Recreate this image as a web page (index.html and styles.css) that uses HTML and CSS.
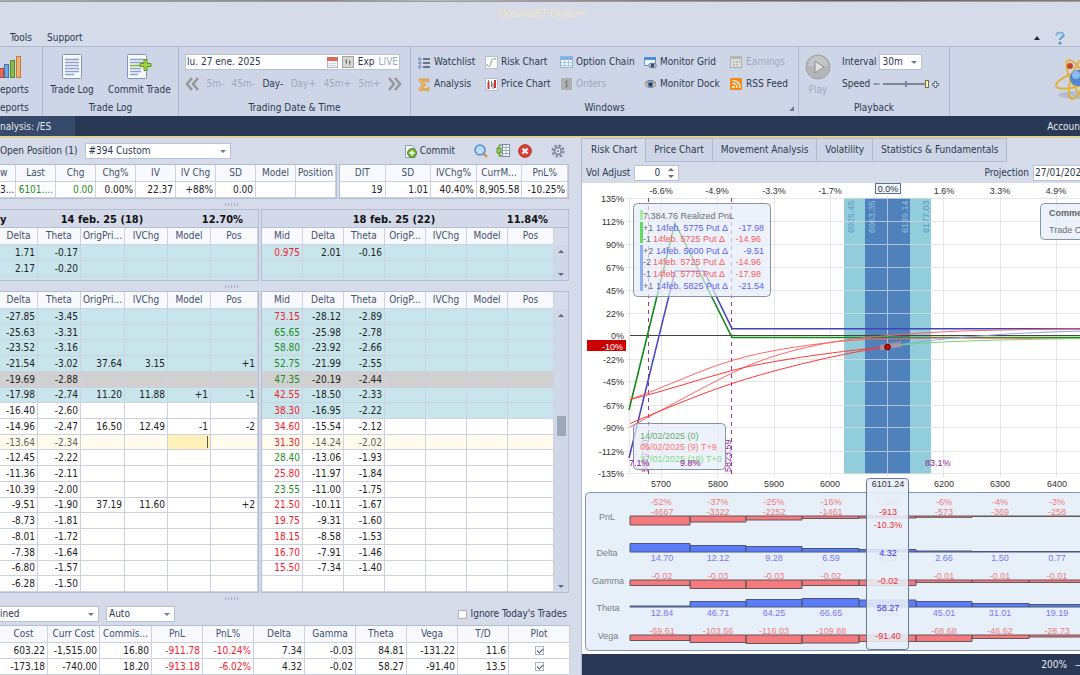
FILE: index.html
```
<!DOCTYPE html>
<html lang="en">
<head>
    <meta charset="UTF-8">
    <meta name="viewport" content="width=device-width, initial-scale=1.0">
    <link rel="stylesheet" href="styles.css">
    <title>OptionNET Explorer</title>
</head>
<body>
    <div class="desktop-edge"></div>
    <header class="titlebar">
        <h1>OptionNET Explorer</h1>
        <nav class="menu">
            <a href="#">Tools</a>
            <a href="#">Support</a>
            <button class="collapse" aria-label="Collapse ribbon"><svg width="6" height="4"><path d="M0 4L3 0L6 4Z" fill="#1e2a40"/></svg></button>
            <button class="help" aria-label="Help"><svg width="10" height="14" viewBox="0 0 10 14"><path d="M1.500 4.500C1.500 1 8.500 1 8.500 4.200C8.500 6.500 5 6 5 9" fill="none" stroke="#6aa6d6" stroke-width="2.400"/><path d="M1.500 4C2 1.500 7.500 1.500 8 4" fill="none" stroke="#b8dcf5" stroke-width="1"/><circle cx="5" cy="12" r="1.600" fill="#5b96cc"/></svg></button>
        </nav>
    </header>

    <div class="ribbon">
        <section class="group g-reports">
            <div class="group-body">
                <button class="big">
                    <svg width="24" height="26" viewBox="0 0 24 26"><rect x="-1.500" y="14.500" width="5" height="9" fill="#e2695c" stroke="#b04a42"/><rect x="4.500" y="10.500" width="4" height="13" fill="#6ea8dc" stroke="#3f76ae"/><rect x="10.500" y="6.500" width="4" height="17" fill="#8cba4c" stroke="#5c8a2c"/><rect x="16.500" y="2.500" width="4" height="21" fill="#f0b270" stroke="#c07c3c"/></svg>
                    eports
                </button>
            </div>
            <h2>eports</h2>
        </section>
        <section class="group g-log">
            <div class="group-body">
                <button class="big">
                    <svg width="26" height="26" viewBox="0 0 26 26"><rect x="3.500" y="0.500" width="19" height="24" rx="1" fill="#f4f7fc" stroke="#8496b8"/><path d="M6 5.500H20M6 8.500H20M6 11.500H20M6 14.500H20M6 17.500H20M6 20.500H15" stroke="#8fa2c6" stroke-width="1.500"/></svg>
                    Trade Log
                </button>
                <button class="big">
                    <svg width="26" height="26" viewBox="0 0 26 26"><rect x="1.500" y="0.500" width="19" height="24" rx="1" fill="#f4f7fc" stroke="#8496b8"/><path d="M4 5.500H18M4 8.500H18M4 14.500H15M4 17.500H15M4 20.500H12" stroke="#8fa2c6" stroke-width="1.500"/><path d="M4 11.500H14" stroke="#7eb33a" stroke-width="1.500"/><path d="M18 5.500H21V9.500H25V12.500H21V16.500H18V12.500H14V9.500H18Z" fill="#a3d847" stroke="#5e9420"/></svg>
                    Commit Trade
                </button>
            </div>
            <h2>Trade Log</h2>
        </section>
        <section class="group g-date">
            <div class="group-body date-body">
                <div class="datebox">
                    <input type="text" value="lu. 27 ene. 2025" aria-label="Trading date">
                    <svg width="11" height="11"><rect x="0.500" y="0.500" width="10" height="10" fill="#f2f5fa" stroke="#b0b8c8"/><rect x="0" y="0" width="11" height="4" fill="#dc6a50"/><path d="M2 6.500H9M2 8.500H9" stroke="#ccd2e0"/></svg>
                    <svg width="12" height="12"><rect x="0.500" y="0.500" width="11" height="11" fill="#d6d6d2" stroke="#a4a4a0"/><path d="M4.500 3V8M3 5.500H5M7.500 4V9M7 6.500H9" stroke="#777"/></svg>
                    <span>Exp</span><span class="dim">LIVE</span>
                </div>
                <div class="steps">
                    <button aria-label="Back"><svg width="14" height="14"><path d="M7 1L2 7L7 13M13 1L8 7L13 13" fill="none" stroke="#96989a" stroke-width="2.600"/></svg></button>
                    <button class="dim">5m-</button>
                    <button class="dim">45m-</button>
                    <button>Day-</button>
                    <button class="dim">Day+</button>
                    <button class="dim">45m+</button>
                    <button class="dim">5m+</button>
                    <button aria-label="Forward"><svg width="14" height="14"><path d="M1 1L6 7L1 13M7 1L12 7L7 13" fill="none" stroke="#96989a" stroke-width="2.600"/></svg></button>
                </div>
            </div>
            <h2>Trading Date &amp; Time</h2>
        </section>
        <section class="group g-windows">
            <div class="group-body windows">
                <button><svg width="13" height="13"><path d="M5 3H12M5 7H12M5 11H12" stroke="#46566e" stroke-width="1.500"/><circle cx="1.800" cy="3" r="1.200" fill="none" stroke="#5b87bb"/><circle cx="1.800" cy="7" r="1.200" fill="none" stroke="#5b87bb"/><circle cx="1.800" cy="11" r="1.200" fill="none" stroke="#5b87bb"/></svg>Watchlist</button>
                <button><svg width="13" height="13"><rect x="0.500" y="0.500" width="12" height="12" fill="#fafcff" stroke="#b4bfd2"/><path d="M2 8C3 12 5 11 6 7C6.500 3 8 2 11 3" fill="none" stroke="#7e9c5a"/></svg>Risk Chart</button>
                <button><svg width="13" height="13"><rect x="0.500" y="0.500" width="12" height="11" fill="#f4f9ff" stroke="#90b4dc"/><rect x="1" y="1" width="11" height="3" fill="#7fb0e4"/><path d="M1 6.500H12M1 9.500H12M4.500 2V12M8.500 2V12" stroke="#a9c6e8"/></svg>Option Chain</button>
                <button><svg width="13" height="13"><rect x="0.500" y="1.500" width="11" height="8" fill="#eff6ff" stroke="#6a9cd4"/><rect x="0" y="1" width="12" height="3" fill="#4f8ed6"/><path d="M4 9.500C6 6.500 11 6.500 13 9.500C11 12.500 6 12.500 4 9.500Z" fill="#d4dcec" stroke="#56637e"/><circle cx="8.500" cy="9.500" r="1.800" fill="#2f4160"/></svg>Monitor Grid</button>
                <button class="dim"><svg width="13" height="13"><rect x="0.500" y="0.500" width="11" height="11" fill="#dedede" stroke="#b0b0b0"/><rect x="0" y="0" width="12" height="3" fill="#b6b6b6"/><path d="M3 6H5M6 6H8M9 6H10M3 9H5M6 9H8" stroke="#999"/></svg>Earnings</button>
                <button><svg width="13" height="13"><path d="M1 1H11V4H10L9 3H4.500L8 6.500L4.500 10.500H9.500L11 9V12.500H1V11L4.500 6.500L1 2.500Z" fill="#f0b95c" stroke="#cf8f34" stroke-width="0.700"/></svg>Analysis</button>
                <button><svg width="13" height="13"><rect x="0.500" y="0.500" width="12" height="12" fill="#fafcff" stroke="#b4bfd2"/><path d="M3.500 4V11M10 2V10" stroke="#cc3030" stroke-width="2"/><path d="M3.500 2V4M6.500 3V9M8 5V11" stroke="#777"/></svg>Price Chart</button>
                <button class="dim"><svg width="13" height="13"><rect x="1" y="0" width="11" height="12" rx="1" fill="#aeb0b2"/><path d="M8.500 4C6 2.500 4.500 5 6.500 6C9 7 7.500 9.500 4.500 8.500M6.500 2V10" fill="none" stroke="#7e8082"/></svg>Orders</button>
                <button><svg width="13" height="13"><path d="M1 7C3 3 10 3 12 7C10 10.500 3 10.500 1 7Z" fill="#e8dcd0" stroke="#a08672"/><circle cx="6.500" cy="6.500" r="3" fill="#4d7cb4"/><circle cx="6.500" cy="6.500" r="1.400" fill="#182844"/><path d="M1 5C4 1.500 9 1.500 12 5" fill="none" stroke="#7c6a60"/></svg>Monitor Dock</button>
                <button><svg width="13" height="13"><rect width="12" height="12" rx="1" fill="#f08a1c"/><circle cx="3.500" cy="9" r="1.200" fill="#fff"/><path d="M2.500 5.500A4 4 0 0 1 7 10M2.500 2.500A7 7 0 0 1 10 10" fill="none" stroke="#fff" stroke-width="1.200"/></svg>RSS Feed</button>
            </div>
            <h2>Windows</h2>
            <svg class="launcher" width="5" height="5"><path d="M5 0V5H0Z" fill="#6b7c98"/></svg>
        </section>
        <section class="group g-play">
            <div class="group-body play-body">
                <button class="big dim">
                    <svg width="26" height="26" viewBox="0 0 26 26"><circle cx="13" cy="13" r="12" fill="#b4b5b7" stroke="#9fa1a4"/><path d="M3 12A10 10 0 0 1 23 12Z" fill="#c4c5c7"/><path d="M10 7L19 13L10 19Z" fill="#e0e1e3" stroke="#8c8e92"/></svg>
                    Play
                </button>
                <div class="play-options">
                    <div class="line">
                        <label for="interval">Interval</label>
                        <span class="drop drop-interval"><select id="interval"><option>30m</option></select></span>
                    </div>
                    <div class="line">
                        <label for="speed">Speed</label>
                        <svg width="7" height="6"><rect x="0.500" y="2" width="6" height="2" fill="#8d98ac"/></svg>
                        <input id="speed" type="range" min="0" max="10" value="10">
                        <svg width="7" height="7"><path d="M2.500 0.500H4.500V2.500H6.500V4.500H4.500V6.500H2.500V4.500H0.500V2.500H2.500Z" fill="#e8ecf4" stroke="#5d6b82"/></svg>
                    </div>
                </div>
            </div>
            <h2>Playback</h2>
        </section>
        <div class="brand">
            <svg width="46" height="46" viewBox="0 0 46 46"><ellipse cx="24" cy="38" rx="20" ry="4" fill="#b4bccd"/><g fill="none" stroke="#e2b23c" stroke-width="2"><ellipse cx="24" cy="22" rx="7" ry="21" transform="rotate(-28 24 22)"/><ellipse cx="24" cy="22" rx="7" ry="21" transform="rotate(18 24 22)"/><ellipse cx="24" cy="22" rx="7" ry="23" transform="rotate(72 24 22)"/></g><circle cx="24" cy="21" r="8" fill="#4b88cf"/><circle cx="22" cy="18" r="4" fill="#8dbcec"/><circle cx="16" cy="9" r="3" fill="#c4432a"/></svg>
        </div>
    </div>

    <div class="doc-tabs">
        <a class="doc-tab" href="#">nalysis: /ES</a>
        <span class="account">Accoun</span>
    </div>

    <main>
        <div class="analysis">
            <div class="toolbar">
                <label for="position">Open Position (1)</label>
                <span class="drop drop-position"><select id="position"><option>#394 Custom</option></select></span>
                <button class="commit"><svg width="13" height="13"><path d="M1.500 0.500H8L11 3.500V12.500H1.500Z" fill="#fbfdff" stroke="#8d9bb4"/><circle cx="8" cy="8" r="4.500" fill="#7cb53c" stroke="#4e8a20"/><path d="M8 5.500V10.500M5.500 8H10.500" stroke="#fff" stroke-width="1.500"/></svg>Commit</button>
                <button aria-label="Zoom"><svg width="14" height="14"><path d="M9 9L13 13" stroke="#d39a52" stroke-width="2.500"/><circle cx="6" cy="6" r="5" fill="#b7dafa" stroke="#5a8cc8" stroke-width="1.500"/></svg></button>
                <button aria-label="Columns"><svg width="14" height="14"><rect x="6.500" y="0.500" width="7" height="12" fill="#fff" stroke="#7b8fae"/><path d="M7 3.500H13M7 6.500H13M7 9.500H13M10 1V12" stroke="#9aabc6"/><path d="M1 4H5V9H1ZM3 1V4M3 9V12H6M3 1H6" fill="#9fd05a" stroke="#5b8e2e"/></svg></button>
                <button aria-label="Delete"><svg width="14" height="14"><circle cx="7" cy="7" r="6.300" fill="#dc4038" stroke="#b3261e"/><path d="M4.500 4.500L9.500 9.500M9.500 4.500L4.500 9.500" stroke="#fff" stroke-width="2"/></svg></button>
                <button class="settings" aria-label="Settings"><svg width="14" height="14"><circle cx="7" cy="7" r="5.500" fill="none" stroke="#7c879b" stroke-width="2" stroke-dasharray="2.400 1.900"/><circle cx="7" cy="7" r="3.400" fill="#eef1f7" stroke="#8791a3" stroke-width="2"/><circle cx="7" cy="7" r="1.200" fill="#8791a3"/></svg></button>
            </div>

            <div class="summary">
                <table class="quote">
                    <thead><tr><th>w</th><th>Last</th><th>Chg</th><th>Chg%</th><th>IV</th><th>IV Chg</th><th>SD</th><th>Model</th><th>Position</th></tr></thead>
                    <tbody><tr><td>3....</td><td class="up">6101....</td><td class="up">0.00</td><td>0.00%</td><td>22.37</td><td>+88%</td><td>0.00</td><td></td><td></td></tr></tbody>
                </table>
                <table class="trade">
                    <thead><tr><th>DIT</th><th>SD</th><th>IVChg%</th><th>CurrM...</th><th>PnL%</th></tr></thead>
                    <tbody><tr><td>19</td><td>1.01</td><td>40.40%</td><td>8,905.58</td><td>-10.25%</td></tr></tbody>
                </table>
            </div>
            <div class="splitter"></div>

            <div class="chains chains-top">
                <div class="chain">
                    <div class="expiry"><span>y</span><span>14 feb. 25 (18)</span><span>12.70%</span></div>
                    <table class="front">
                        <thead><tr><th>Delta</th><th>Theta</th><th>OrigPri...</th><th>IVChg</th><th>Model</th><th>Pos</th></tr></thead>
                        <tbody>
                            <tr class="itm"><td>1.71</td><td>-0.17</td><td></td><td></td><td></td><td></td></tr>
                            <tr class="itm"><td>2.17</td><td>-0.20</td><td></td><td></td><td></td><td></td></tr>
                            <tr class="itm"><td></td><td></td><td></td><td></td><td></td><td></td></tr>
                        </tbody>
                    </table>
                </div>
                <div class="chain">
                    <div class="expiry back-expiry"><span></span><span>18 feb. 25 (22)</span><span>11.84%</span></div>
                    <div class="with-scroll">
                        <table class="back">
                            <thead><tr><th>Mid</th><th>Delta</th><th>Theta</th><th>OrigP...</th><th>IVChg</th><th>Model</th><th>Pos</th></tr></thead>
                            <tbody>
                                <tr class="itm"><td class="down">0.975</td><td>2.01</td><td>-0.16</td><td></td><td></td><td></td><td></td></tr>
                                <tr class="itm"><td></td><td></td><td></td><td></td><td></td><td></td><td></td></tr>
                                <tr class="itm"><td></td><td></td><td></td><td></td><td></td><td></td><td></td></tr>
                            </tbody>
                        </table>
                        <div class="scroll"><i class="arrow-up"></i><i class="arrow-down"></i></div>
                    </div>
                </div>
            </div>
            <div class="splitter"></div>

            <div class="chains chains-main">
                <div class="chain">
                    <table class="front">
                        <thead><tr><th>Delta</th><th>Theta</th><th>OrigPri...</th><th>IVChg</th><th>Model</th><th>Pos</th></tr></thead>
                        <tbody>
                            <tr class="itm"><td>-27.85</td><td>-3.45</td><td></td><td></td><td></td><td></td></tr>
                            <tr class="itm"><td>-25.63</td><td>-3.31</td><td></td><td></td><td></td><td></td></tr>
                            <tr class="itm"><td>-23.52</td><td>-3.16</td><td></td><td></td><td></td><td></td></tr>
                            <tr class="itm"><td>-21.54</td><td>-3.02</td><td>37.64</td><td>3.15</td><td></td><td>+1</td></tr>
                            <tr class="marked"><td>-19.69</td><td>-2.88</td><td></td><td></td><td></td><td></td></tr>
                            <tr class="itm"><td>-17.98</td><td>-2.74</td><td>11.20</td><td>11.88</td><td>+1</td><td>-1</td></tr>
                            <tr><td>-16.40</td><td>-2.60</td><td></td><td></td><td></td><td></td></tr>
                            <tr><td>-14.96</td><td>-2.47</td><td>16.50</td><td>12.49</td><td>-1</td><td>-2</td></tr>
                            <tr class="current"><td>-13.64</td><td>-2.34</td><td></td><td></td><td class="editing"><i class="caret"></i></td><td></td></tr>
                            <tr><td>-12.45</td><td>-2.22</td><td></td><td></td><td></td><td></td></tr>
                            <tr><td>-11.36</td><td>-2.11</td><td></td><td></td><td></td><td></td></tr>
                            <tr><td>-10.39</td><td>-2.00</td><td></td><td></td><td></td><td></td></tr>
                            <tr><td>-9.51</td><td>-1.90</td><td>37.19</td><td>11.60</td><td></td><td>+2</td></tr>
                            <tr><td>-8.73</td><td>-1.81</td><td></td><td></td><td></td><td></td></tr>
                            <tr><td>-8.01</td><td>-1.72</td><td></td><td></td><td></td><td></td></tr>
                            <tr><td>-7.38</td><td>-1.64</td><td></td><td></td><td></td><td></td></tr>
                            <tr><td>-6.80</td><td>-1.57</td><td></td><td></td><td></td><td></td></tr>
                            <tr><td>-6.28</td><td>-1.50</td><td></td><td></td><td></td><td></td></tr>
                        </tbody>
                    </table>
                </div>
                <div class="chain">
                    <div class="with-scroll">
                        <table class="back">
                            <thead><tr><th>Mid</th><th>Delta</th><th>Theta</th><th>OrigP...</th><th>IVChg</th><th>Model</th><th>Pos</th></tr></thead>
                            <tbody>
                                <tr class="itm"><td class="down">73.15</td><td>-28.12</td><td>-2.89</td><td></td><td></td><td></td><td></td></tr>
                                <tr class="itm"><td class="up">65.65</td><td>-25.98</td><td>-2.78</td><td></td><td></td><td></td><td></td></tr>
                                <tr class="itm"><td class="up">58.80</td><td>-23.92</td><td>-2.66</td><td></td><td></td><td></td><td></td></tr>
                                <tr class="itm"><td class="up">52.75</td><td>-21.99</td><td>-2.55</td><td></td><td></td><td></td><td></td></tr>
                                <tr class="marked"><td class="up">47.35</td><td>-20.19</td><td>-2.44</td><td></td><td></td><td></td><td></td></tr>
                                <tr class="itm"><td class="down">42.55</td><td>-18.50</td><td>-2.33</td><td></td><td></td><td></td><td></td></tr>
                                <tr class="itm"><td class="down">38.30</td><td>-16.95</td><td>-2.22</td><td></td><td></td><td></td><td></td></tr>
                                <tr><td class="down">34.60</td><td>-15.54</td><td>-2.12</td><td></td><td></td><td></td><td></td></tr>
                                <tr class="current"><td class="down">31.30</td><td>-14.24</td><td>-2.02</td><td></td><td></td><td></td><td></td></tr>
                                <tr><td class="up">28.40</td><td>-13.06</td><td>-1.93</td><td></td><td></td><td></td><td></td></tr>
                                <tr><td class="down">25.80</td><td>-11.97</td><td>-1.84</td><td></td><td></td><td></td><td></td></tr>
                                <tr><td class="up">23.55</td><td>-11.00</td><td>-1.75</td><td></td><td></td><td></td><td></td></tr>
                                <tr><td class="down">21.50</td><td>-10.11</td><td>-1.67</td><td></td><td></td><td></td><td></td></tr>
                                <tr><td class="down">19.75</td><td>-9.31</td><td>-1.60</td><td></td><td></td><td></td><td></td></tr>
                                <tr><td class="down">18.15</td><td>-8.58</td><td>-1.53</td><td></td><td></td><td></td><td></td></tr>
                                <tr><td class="down">16.70</td><td>-7.91</td><td>-1.46</td><td></td><td></td><td></td><td></td></tr>
                                <tr><td class="down">15.50</td><td>-7.34</td><td>-1.40</td><td></td><td></td><td></td><td></td></tr>
                                <tr><td>&nbsp;</td><td></td><td></td><td></td><td></td><td></td><td></td></tr>
                            </tbody>
                        </table>
                        <div class="scroll"><i class="arrow-up"></i><i class="thumb"></i><i class="arrow-down"></i></div>
                    </div>
                </div>
            </div>
            <div class="splitter"></div>

            <div class="filters">
                <span class="drop drop-combined"><select aria-label="View"><option>ined</option></select></span>
                <span class="drop drop-auto"><select aria-label="Mode"><option>Auto</option></select></span>
                <label class="ignore"><input type="checkbox"> Ignore Today's Trades</label>
            </div>
            <table class="totals">
                <thead><tr><th>Cost</th><th>Curr Cost</th><th>Commis...</th><th>PnL</th><th>PnL%</th><th>Delta</th><th>Gamma</th><th>Theta</th><th>Vega</th><th>T/D</th><th>Plot</th></tr></thead>
                <tbody>
                    <tr><td>603.22</td><td>-1,515.00</td><td>16.80</td><td class="down">-911.78</td><td class="down">-10.24%</td><td>7.34</td><td>-0.03</td><td>84.81</td><td>-131.22</td><td>11.6</td><td class="plot"><input type="checkbox" aria-label="Plot first trade" checked></td></tr>
                    <tr><td>-173.18</td><td>-740.00</td><td>18.20</td><td class="down">-913.18</td><td class="down">-6.02%</td><td>4.32</td><td>-0.02</td><td>58.27</td><td>-91.40</td><td>13.5</td><td class="plot"><input type="checkbox" aria-label="Plot second trade" checked></td></tr>
                </tbody>
            </table>
        </div>

        <div class="charts">
            <nav class="chart-tabs">
                <a class="active" href="#">Risk Chart</a>
                <a href="#">Price Chart</a>
                <a href="#">Movement Analysis</a>
                <a href="#">Volatility</a>
                <a href="#">Statistics &amp; Fundamentals</a>
            </nav>
            <div class="chart-options">
                <label for="vol">Vol Adjust</label>
                <span class="spin"><input id="vol" type="text" value="0"><span><i class="arrow-up"></i><i class="arrow-down"></i></span></span>
                <label class="projection" for="projection">Projection</label>
                <input id="projection" type="text" value="27/01/2025">
            </div>
            <svg class="risk" viewBox="582 183 498 471" preserveAspectRatio="xMinYMin slice">
                <!-- price bands -->
                <rect x="844" y="198" width="87" height="276" fill="#92cddc"/>
                <rect x="865" y="198" width="45" height="276" fill="#4f81bd"/>
                <g class="band">
                    <text transform="translate(854 233) rotate(-90)" fill="#5f97c4">6025.45</text>
                    <text transform="translate(875 233) rotate(-90)" fill="#92c0dc">6063.35</text>
                    <text transform="translate(908 233) rotate(-90)" fill="#92c0dc">6139.14</text>
                    <text transform="translate(929 233) rotate(-90)" fill="#5f97c4">6177.03</text>
                </g>
                <!-- grid -->
                <path class="grid" d="M626 198.500H1080M626 221.500H1080M626 244.500H1080M626 267.500H1080M626 290.500H1080M626 313.500H1080M626 359.500H1080M626 381.500H1080M626 405.500H1080M626 427.500H1080M626 451.500H1080M626 473.500H1080M629.500 198V474M661.500 195V477M717.500 195V477M774.500 195V477M830.500 195V477M887.500 195V477M943.500 195V477M1000.500 195V477M1056.500 195V477"/>
                <path d="M630 335.500H1080" stroke="#444"/>
                <path d="M648.500 198V474M731.500 198V474" stroke="#a030a0" stroke-dasharray="4 4"/>
                <!-- expiration and T+n curves -->
                <path d="M629 410L675 223L732 337.500H1080" fill="none" stroke="#118a18" stroke-width="1.600"/>
                <path d="M629 458L675 271H704L732 328.700H1080" fill="none" stroke="#4444bb" stroke-width="1.500"/>
                <g fill="none" stroke="#ff6666">
                    <path d="M630 399.500C668 386 700 370 732 360.500S800 346 830 342.500S890 338 950 338L1080 338.500"/>
                    <path d="M630 427C665 408 700 389 732 373S800 348 830 342.500S930 331.500 980 330.500S1050 329 1080 329"/>
                    <path d="M630 399.500C665 391 700 379 732 370.500S830 352 888 346.700" stroke="#ff3838"/>
                    <path d="M630 423.500C665 409 700 394 732 383.500S830 355 888 346.700" stroke="#ff3838"/>
                    <path d="M888 346.700C930 339 980 336 1000 334.500S1050 332 1080 331" stroke="#8aa8ee"/>
                    <path d="M888 346.700C930 341 990 340 1080 338.500" stroke="#72d872"/>
                </g>
                <path d="M880 345L901 341.500V347L880 350.500Z" fill="#c09898" fill-opacity="0.700"/>
                <circle cx="887.500" cy="347" r="2.800" fill="#ee0000" stroke="#400"/>
                <!-- axis labels -->
                <g class="axis end">
                    <text x="624" y="202">135%</text><text x="624" y="225">112%</text><text x="624" y="248">90%</text><text x="624" y="271">67%</text><text x="624" y="294">45%</text><text x="624" y="317">22%</text><text x="624" y="339">0%</text><text x="624" y="363">-22%</text><text x="624" y="385">-45%</text><text x="624" y="409">-67%</text><text x="624" y="431">-90%</text><text x="624" y="455">-112%</text><text x="624" y="477">-135%</text>
                </g>
                <rect x="587" y="340" width="39" height="11" fill="#cc0000"/>
                <text class="end" x="623" y="350" fill="#fff">-10%</text>
                <rect x="875.500" y="183.500" width="25" height="10" fill="#edf4fb" stroke="#5f7388"/>
                <g class="axis mid">
                    <text x="661" y="194">-6.6%</text><text x="717" y="194">-4.9%</text><text x="774" y="194">-3.3%</text><text x="830" y="194">-1.7%</text><text x="888" y="192">0.0%</text><text x="944" y="194">1.6%</text><text x="1000" y="194">3.3%</text><text x="1056" y="194">4.9%</text>
                    <text x="661" y="487">5700</text><text x="718" y="487">5800</text><text x="774" y="487">5900</text><text x="830" y="487">6000</text><text x="944" y="487">6200</text><text x="1000" y="487">6300</text><text x="1057" y="487">6400</text>
                </g>
                <g fill="#902090">
                    <text transform="translate(648 472) rotate(-90)">5677.20</text>
                    <text transform="translate(731 472) rotate(-90)">5823.59</text>
                </g>
                <!-- open legs -->
                <rect class="note" x="633.500" y="203.500" width="137" height="93" rx="4"/>
                <rect x="640" y="210" width="3" height="10" fill="#a9eba9"/>
                <rect x="640" y="222" width="3" height="21" fill="#66d866"/>
                <rect x="640" y="245" width="3" height="46" fill="#8fb2ee"/>
                <g fill="#6b6f78"><text x="643" y="219">7,384.76 Realized PnL</text><text x="643" y="231">+1</text><text x="643" y="242">-1</text><text x="643" y="254">+2</text><text x="643" y="265">-2</text><text x="643" y="277">-1</text><text x="643" y="289">+1</text></g>
                <g fill="#5c62f4"><text x="656" y="231">14feb. 5775 Put Δ</text><text x="656" y="254">14feb. 5600 Put Δ</text><text x="656" y="289">14feb. 5825 Put Δ</text></g>
                <g fill="#fa5a5e"><text x="653" y="242">14feb. 5725 Put Δ</text><text x="653" y="265">14feb. 5725 Put Δ</text><text x="653" y="277">14feb. 5775 Put Δ</text></g>
                <g class="end" fill="#5c62f4"><text x="764" y="231">-17.98</text><text x="764" y="254">-9.51</text><text x="764" y="289">-21.54</text></g>
                <g class="end" fill="#fa5a5e"><text x="761" y="242">-14.96</text><text x="761" y="265">-14.96</text><text x="761" y="277">-17.98</text></g>
                <!-- dates -->
                <rect class="note" x="633.500" y="423.500" width="92" height="46" rx="4"/>
                <text x="640" y="439" fill="#68ab6c">14/02/2025 (0)</text>
                <text x="640" y="450" fill="#ff7676">05/02/2025 (9) T+9</text>
                <text x="640" y="462" fill="#80dc84">27/01/2025 (18) T+0</text>
                <g fill="#902090"><text x="629" y="466">7.1%</text><text x="680" y="466">9.8%</text><text x="925" y="466">83.1%</text></g>
                <!-- comments -->
                <rect class="note" x="1040.500" y="203.500" width="60" height="36" rx="4"/>
                <text class="bold" x="1049" y="216" fill="#5f636b">Comme</text>
                <text x="1049" y="233" fill="#6b6f78">Trade O</text>
                <!-- greeks by price -->
                <rect x="585.500" y="492.500" width="520" height="158" rx="4" fill="#e7eff8" stroke="#8295aa"/>
                <g class="mid" fill="#7a7e86"><text x="607" y="520">PnL</text><text x="607" y="556">Delta</text><text x="608" y="584">Gamma</text><text x="608" y="611">Theta</text><text x="608" y="639">Vega</text></g>
                <g class="mid losses">
                    <text x="661" y="505">-52%</text><text x="718" y="505">-37%</text><text x="774" y="505">-25%</text><text x="831" y="505">-16%</text><text x="888" y="505">-10%</text><text x="944" y="505">-6%</text><text x="1000" y="505">-4%</text><text x="1057" y="505">-3%</text>
                    <text x="662" y="515">-4667</text><text x="718" y="515">-3322</text><text x="774" y="515">-2252</text><text x="831" y="515">-1461</text><text x="944" y="515">-573</text><text x="1000" y="515">-369</text><text x="1057" y="515">-258</text>
                    <text x="662" y="579">-0.02</text><text x="718" y="579">-0.03</text><text x="774" y="579">-0.03</text><text x="831" y="579">-0.02</text><text x="944" y="579">-0.01</text><text x="1000" y="579">-0.01</text><text x="1057" y="579">-0.01</text>
                    <text x="662" y="634">-69.61</text><text x="718" y="634">-103.56</text><text x="774" y="634">-116.03</text><text x="831" y="634">-109.88</text><text x="944" y="634">-68.68</text><text x="1000" y="634">-46.62</text><text x="1057" y="634">-28.73</text>
                </g>
                <g class="mid gains">
                    <text x="662" y="561">14.70</text><text x="718" y="561">12.12</text><text x="774" y="561">9.28</text><text x="831" y="561">6.59</text><text x="888" y="561">4.33</text><text x="944" y="561">2.66</text><text x="1000" y="561">1.50</text><text x="1057" y="561">0.77</text>
                    <text x="662" y="616">12.84</text><text x="718" y="616">46.71</text><text x="774" y="616">64.25</text><text x="831" y="616">66.65</text><text x="888" y="616">58.41</text><text x="944" y="616">45.01</text><text x="1000" y="616">31.01</text><text x="1057" y="616">19.19</text>
                </g>
                <g class="loss-bars">
                    <path d="M630 516H690V525H630ZM690 516H746V522H690ZM746 516H802V520H746ZM802 516H859V518.500H802ZM859 516H916V518H859ZM916 516H972V517.300H916ZM972 516H1090V516.500H972Z"/>
                    <path d="M630 580H690V585.500H630ZM690 580H746V588.500H690ZM746 580H802V588.500H746ZM802 580H859V585.500H802ZM859 580H916V585.500H859ZM916 580H972V582.500H916ZM972 580H1029V582.500H972ZM1029 580H1090V582.500H1029Z"/>
                    <path d="M630 635H690V640.500H630ZM690 635H746V642.500H690ZM746 635H802V643.500H746ZM802 635H859V643H802ZM859 635H916V641.500H859ZM916 635H972V641.500H916ZM972 635H1029V638.500H972ZM1029 635H1090V637H1029Z"/>
                </g>
                <g class="gain-bars">
                    <path d="M630 552H690V543.500H630ZM690 552H746V545.500H690ZM746 552H802V546.500H746ZM802 552H859V548.500H802ZM859 552H916V549.500H859ZM916 552H972V551H916ZM972 552H1090V551.500H972Z"/>
                    <path d="M630 607H690V606H630ZM690 607H746V601.500H690ZM746 607H802V599.500H746ZM802 607H859V598.500H802ZM859 607H916V600H859ZM916 607H972V601.500H916ZM972 607H1029V603.500H972ZM1029 607H1090V604.500H1029Z"/>
                </g>
                <!-- current price column -->
                <rect x="866.500" y="478.500" width="42" height="171" rx="3" fill="#e7eff8" fill-opacity="0.880" stroke="#66798f"/>
                <g class="mid">
                    <text x="888" y="487" fill="#333">6101.24</text>
                    <text x="888" y="515" fill="#f03038">-913</text><text x="888" y="528" fill="#f03038">-10.3%</text>
                    <text x="888" y="556" fill="#3434f0">4.32</text><text x="888" y="584" fill="#f03038">-0.02</text>
                    <text x="888" y="611" fill="#3434f0">58.27</text><text x="888" y="639" fill="#f03038">-91.40</text>
                </g>
            </svg>
            <footer><span>200%</span><span>—</span></footer>
        </div>
    </main>
</body>
</html>
```
FILE: styles.css
```
* { box-sizing: border-box; }
body {
    margin: 0;
    height: 100vh;
    display: flex;
    flex-direction: column;
    overflow: hidden;
    background-color: #d6dbe9;
    color: #2b3950;
    font: 10px/14px "DejaVu Sans Condensed", "DejaVu Sans", sans-serif;
    white-space: nowrap;
}
h1, h2 { margin: 0; font-size: 10px; font-weight: normal; }
a { color: inherit; text-decoration: none; }
button, input, select {
    margin: 0;
    padding: 0;
    border: 0;
    background: none;
    color: inherit;
    font: inherit;
    line-height: 14px;
}
svg { display: block; flex: none; }
.dim { color: #9ea8bb; }

/* title bar */
.desktop-edge {
    height: 2px;
    flex: none;
    border-bottom: 1px solid #999ca3;
    background: linear-gradient(90deg, #aaa, #8a8580 30%, #bbb 40%, #857c78 60%, #6a5a5c 80%, #8c7d70);
}
.titlebar { height: 44px; flex: none; }
.titlebar h1 {
    padding: 5px 0 0 6px;
    color: #f1e7bf;
    text-align: center;
}
.menu {
    display: flex;
    align-items: center;
    gap: 15px;
    padding: 10px 15px 0 10px;
    height: 24px;
}
.collapse { margin-left: auto; }

/* ribbon */
.ribbon {
    display: flex;
    flex: none;
    height: 70px;
    border-top: 1px solid #aebad0;
    background-color: #ced5e6;
}
.group {
    position: relative;
    display: flex;
    flex-direction: column;
    border-right: 1px solid #aebad0;
}
.group h2 { margin-top: auto; padding-bottom: 1px; text-align: center; }
.group-body { display: flex; justify-content: space-around; padding-top: 7px; }
.g-reports { width: 43px; }
.g-reports .big { margin-right: auto; align-items: flex-start; }
.g-reports h2 { text-align: left; }
.g-log { width: 136px; }
.g-date { width: 232px; }
.g-windows { width: 388px; }
.g-play { width: 151px; }
.big { display: flex; flex-direction: column; align-items: center; gap: 3px; }
.date-body { flex-direction: column; gap: 7px; padding: 7px 6px 0; }
.datebox {
    display: flex;
    align-items: center;
    gap: 4px;
    width: 215px;
    height: 16px;
    padding: 0 1px;
    border: 1px solid #b9c3d6;
    background-color: #fff;
}
.datebox input { flex: 1; min-width: 0; }
.steps { display: flex; justify-content: space-between; align-items: center; width: 217px; }
.windows {
    display: grid;
    grid-template-columns: 67px 75px 84px 86px auto;
    row-gap: 8px;
    padding: 8px 0 0 7px;
    justify-content: start;
}
.windows button { display: flex; align-items: center; gap: 3px; }
.launcher { position: absolute; right: 4px; bottom: 5px; }
.play-body { justify-content: flex-start; gap: 11px; padding-left: 6px; }
.play-options { display: flex; flex-direction: column; gap: 6px; }
.line { display: flex; align-items: center; gap: 3px; height: 16px; }
#speed {
    appearance: none;
    width: 46px;
    height: 8px;
    background:
        linear-gradient(#7d8798, #7d8798) center / 2px 6px no-repeat,
        linear-gradient(#7d8798, #7d8798) center / 100% 2px no-repeat;
}
#speed::-webkit-slider-thumb {
    appearance: none;
    width: 4px;
    height: 8px;
    border: 1px solid #767044;
    background-color: #fbf3b8;
}
.brand { margin-left: auto; width: 26px; padding-top: 10px; overflow: hidden; }

/* drop-downs */
.drop { position: relative; display: inline-flex; height: 16px; border: 1px solid #b9c3d6; background-color: #fff; }
.drop select { appearance: none; width: 100%; padding-left: 2px; }
.drop::after, .arrow-up, .arrow-down {
    border: 3px solid transparent;
    width: 0;
    height: 0;
}
.drop::after {
    content: "";
    position: absolute;
    right: 4px;
    top: 6px;
    border-top-color: #6d7c94;
    border-bottom: 0;
    pointer-events: none;
}
.arrow-up { border-bottom-color: #5d6d86; border-top: 0; }
.arrow-down { border-top-color: #5d6d86; border-bottom: 0; }
.drop-interval { width: 43px; }
.drop-position { width: 146px; }
.drop-combined { width: 99px; }
.drop-combined select { padding: 0; }
.drop-auto { width: 69px; }

/* document tabs */
.doc-tabs {
    display: flex;
    flex: none;
    height: 22px;
    align-items: stretch;
    border-bottom: 2px solid #dfd293;
    background-color: #293955;
    color: #e6eaf2;
    line-height: 22px;
}
.doc-tab { width: 75px; background-color: #35496b; }
.account { margin-left: auto; }

main {
    flex: 1;
    min-height: 0;
    display: grid;
    grid-template-columns: minmax(0, 581fr) minmax(0, 499fr);
}
.analysis { display: flex; flex-direction: column; min-height: 0; padding-right: 11px; }
.toolbar { display: flex; align-items: center; gap: 8px; height: 26px; flex: none; padding-right: 5px; }
.toolbar .commit { display: flex; align-items: center; gap: 3px; margin: 0 11px 0 auto; }
.toolbar .settings { margin-left: 11px; }

/* tables */
table {
    width: 100%;
    table-layout: fixed;
    border-collapse: separate;
    border-spacing: 0;
    background-color: #fff;
    color: #222;
}
th, td {
    padding: 0 2px;
    border-right: 1px solid #cdd1e0;
    border-bottom: 1px solid #cdd1e0;
    overflow: hidden;
    text-align: right;
}
th {
    height: 17px;
    padding: 0;
    background-color: #f7f9fd;
    color: #44506a;
    font-weight: normal;
    text-align: center;
}
td { height: 16px; }
.up { color: #1d8b22; }
.down { color: #f5222d; }
.summary { display: grid; grid-template-columns: 336px minmax(0, 1fr); gap: 3px; padding-right: 1px; }
.summary table { border: 1px solid #b4bed2; }
.summary .quote { border-left: 0; }
.quote th { width: 40px; }
.quote th:first-child { width: 16px; }
.quote th:first-child, .quote td:first-child { padding: 0; text-align: left; }

.splitter {
    flex: none;
    height: 10px;
    background: repeating-linear-gradient(90deg, #a9b0c2 0 1px, transparent 1px 3px) 225px center / 13px 3px no-repeat;
}
.chains { display: grid; grid-template-columns: minmax(0, 259fr) minmax(0, 308fr); gap: 2px; padding-right: 1px; }
.chain { display: flex; flex-direction: column; min-height: 0; overflow: hidden; border: 1px solid #b4bed2; }
.chain:first-child { border-left: 0; }
.chains-top { height: 72px; flex: none; }
.chains-main { flex: 1; min-height: 0; }
.chains-main .chain > *, .chains-main table { height: 100%; }
.chains-main td { height: auto; line-height: 13px; }
.with-scroll { display: flex; min-height: 0; flex: 1; }
.with-scroll table { width: calc(100% - 14px); }
.expiry {
    display: grid;
    grid-template-columns: 40px 124px 1fr;
    height: 18px;
    flex: none;
    padding-right: 15px;
    border-bottom: 1px solid #b4bed2;
    background-color: #d3d9e8;
    color: #111;
    font-size: 11px;
    font-weight: bold;
    line-height: 19px;
}
.expiry span:nth-child(2) { text-align: center; }
.expiry span:last-child { text-align: right; }
.back-expiry { grid-template-columns: 70px 124px 1fr; padding-right: 20px; }
.front th { width: 43px; }
.front th:first-child { width: 38px; }
.front th:last-child { width: auto; }
.front th:nth-child(3) { width: 44px; }
.back th { width: 41px; }
.back th:last-child { width: auto; }
.itm { background-color: #c8e5ec; }
.marked { background-color: #d0d0d0; }
.current { background-color: #fffcee; color: #66645a; }
.editing { background-color: #fff1b8; }
.caret { display: block; width: 1px; height: 12px; margin-left: auto; background-color: #555; }
.scroll {
    display: flex;
    flex-direction: column;
    align-items: center;
    width: 14px;
    padding: 5px 0 4px;
    margin-top: 17px;
    background-color: #d0d7e7;
}
.scroll .arrow-down { margin-top: auto; }
.thumb { width: 9px; height: 20px; margin-top: 99px; background-color: #9ca7b8; }

.filters { display: flex; align-items: center; gap: 7px; height: 22px; flex: none; }
.drop-combined { border-left: 0; }
.ignore { display: flex; align-items: center; gap: 4px; margin-left: auto; padding-right: 3px; }
.totals { flex: none; border-top: 1px solid #b4bed2; }
.totals th { width: 51px; }
.totals th:first-child { width: 48px; }
.totals th:nth-child(2), .totals th:nth-child(3) { width: 52px; }
.totals th:last-child { width: auto; }
.totals .plot { text-align: center; }
input[type="checkbox"] {
    appearance: none;
    display: inline-block;
    vertical-align: middle;
    width: 9px;
    height: 9px;
    border: 1px solid #a9b4c8;
    background-color: #fff;
}
input[type="checkbox"]:checked::before {
    content: "";
    display: block;
    width: 5px;
    height: 3px;
    margin: 1px;
    border: solid #4f5d74;
    border-width: 0 0 1px 1px;
    transform: rotate(-45deg);
}

/* charts */
.charts { display: flex; flex-direction: column; min-height: 0; border-left: 1px solid #aebad0; overflow: hidden; }
.chart-tabs { display: flex; flex: none; height: 24px; }
.chart-tabs a {
    padding: 0 8px;
    border: 1px solid #aebad0;
    border-left: 0;
    background-color: #ced5e6;
    line-height: 22px;
}
.chart-tabs .active { padding-left: 9px; border-bottom-color: transparent; background-color: transparent; }
.chart-options { display: flex; align-items: center; flex: none; gap: 4px; height: 21px; padding-left: 4px; }
.spin {
    display: flex;
    align-items: center;
    width: 45px;
    height: 16px;
    border: 1px solid #b9c3d6;
    background-color: #fff;
}
.spin input { flex: 1; min-width: 0; text-align: right; }
.spin span { display: flex; flex-direction: column; gap: 4px; padding: 0 4px 0 8px; }
.projection { margin-left: auto; }
#projection {
    width: 47px;
    height: 16px;
    padding-left: 1px;
    border: 1px solid #b9c3d6;
    border-right: 0;
    background-color: #fff;
}
.risk {
    flex: 1;
    width: 100%;
    min-height: 0;
    background-color: #fff;
    font: 9px "Liberation Sans", Arial, sans-serif;
}
.end { text-anchor: end; }
.mid { text-anchor: middle; }
.axis { fill: #333; }
.grid { stroke: #dcdcdc; stroke-opacity: 0.7; }
.note { fill: #e6edf8; fill-opacity: 0.7; stroke: #8794a8; }
.bold { font-weight: bold; }
.losses { fill: #f27880; }
.gains { fill: #7878f6; }
.loss-bars { fill: #f47a7e; stroke: #665558; }
.gain-bars { fill: #5a7cfa; stroke: #4a5878; }
footer {
    display: flex;
    flex: none;
    justify-content: flex-end;
    gap: 8px;
    height: 21px;
    background-color: #293955;
    color: #e6eaf2;
    line-height: 21px;
}
footer span:last-child { width: 5px; overflow: hidden; }
```
